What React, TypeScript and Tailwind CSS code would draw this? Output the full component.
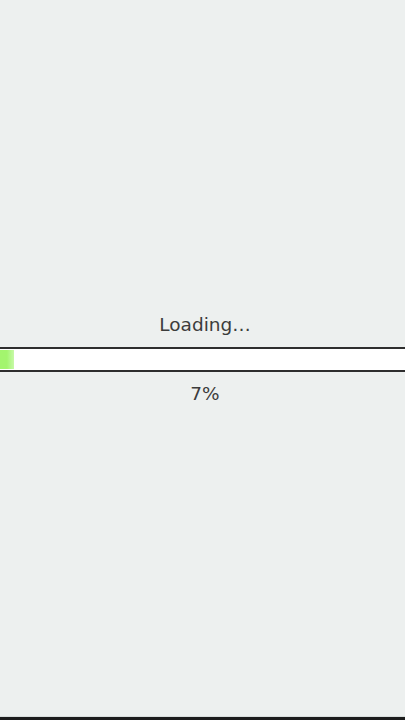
import React from 'react'

const progress = 7

const App: React.FC = () => {
  return (
    <div className="h-[720px] w-full flex flex-col bg-[#edf0ef] text-[#3c3c3c] font-['DejaVu_Sans',sans-serif]">
      <div className="flex-1 flex flex-col justify-center pb-[6px]">
        <div className="text-center text-[18.5px] leading-[24px] mt-[8px] pl-[5px]">Loading…</div>
        <div className="mt-[10px] h-[25px] border-y-[2px] border-[#2e2e2e] bg-white flex items-center">
          <div
            className="h-[19px] bg-gradient-to-r from-[#a3f56e] via-[#a3f56e] to-[#c8f9a8]"
            style={{ width: `${(progress / 100) * 200}%`, maxWidth: '14px' }}
          />
        </div>
        <div className="mt-[10px] text-center text-[18.5px] leading-[24px] pl-[5px]">{progress}%</div>
      </div>
      <div className="h-[1px] bg-[#d9dedd]" />
      <div className="h-[3px] bg-[#1c1c1c]" />
    </div>
  )
}

export default App
